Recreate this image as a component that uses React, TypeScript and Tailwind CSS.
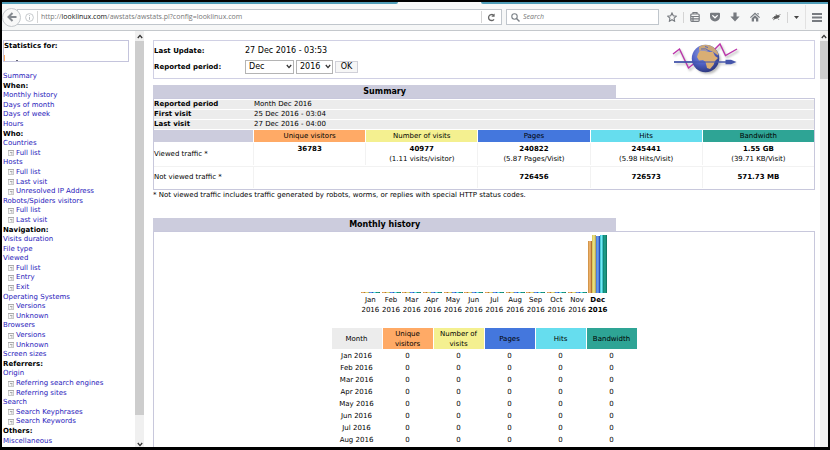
import React from 'react';

interface NavItem {
  label: string;
  kind: 'link' | 'head' | 'sub';
}

const nav: NavItem[] = [
  { label: 'Summary', kind: 'link' },
  { label: 'When:', kind: 'head' },
  { label: 'Monthly history', kind: 'link' },
  { label: 'Days of month', kind: 'link' },
  { label: 'Days of week', kind: 'link' },
  { label: 'Hours', kind: 'link' },
  { label: 'Who:', kind: 'head' },
  { label: 'Countries', kind: 'link' },
  { label: 'Full list', kind: 'sub' },
  { label: 'Hosts', kind: 'link' },
  { label: 'Full list', kind: 'sub' },
  { label: 'Last visit', kind: 'sub' },
  { label: 'Unresolved IP Address', kind: 'sub' },
  { label: 'Robots/Spiders visitors', kind: 'link' },
  { label: 'Full list', kind: 'sub' },
  { label: 'Last visit', kind: 'sub' },
  { label: 'Navigation:', kind: 'head' },
  { label: 'Visits duration', kind: 'link' },
  { label: 'File type', kind: 'link' },
  { label: 'Viewed', kind: 'link' },
  { label: 'Full list', kind: 'sub' },
  { label: 'Entry', kind: 'sub' },
  { label: 'Exit', kind: 'sub' },
  { label: 'Operating Systems', kind: 'link' },
  { label: 'Versions', kind: 'sub' },
  { label: 'Unknown', kind: 'sub' },
  { label: 'Browsers', kind: 'link' },
  { label: 'Versions', kind: 'sub' },
  { label: 'Unknown', kind: 'sub' },
  { label: 'Screen sizes', kind: 'link' },
  { label: 'Referrers:', kind: 'head' },
  { label: 'Origin', kind: 'link' },
  { label: 'Referring search engines', kind: 'sub' },
  { label: 'Referring sites', kind: 'sub' },
  { label: 'Search', kind: 'link' },
  { label: 'Search Keyphrases', kind: 'sub' },
  { label: 'Search Keywords', kind: 'sub' },
  { label: 'Others:', kind: 'head' },
  { label: 'Miscellaneous', kind: 'link' },
];

const months = ['Jan', 'Feb', 'Mar', 'Apr', 'May', 'Jun', 'Jul', 'Aug', 'Sep', 'Oct', 'Nov', 'Dec'];

const metrics = [
  { name: 'Unique visitors', bg: 'bg-[#ffaa66]', viewed: '36783', ratio: '', other: '' },
  { name: 'Number of visits', bg: 'bg-[#f4f090]', viewed: '40977', ratio: '(1.11 visits/visitor)', other: '' },
  { name: 'Pages', bg: 'bg-[#4477dd]', viewed: '240822', ratio: '(5.87 Pages/Visit)', other: '726456' },
  { name: 'Hits', bg: 'bg-[#66ddee]', viewed: '245441', ratio: '(5.98 Hits/Visit)', other: '726573' },
  { name: 'Bandwidth', bg: 'bg-[#2ea495]', viewed: '1.55 GB', ratio: '(39.71 KB/Visit)', other: '571.73 MB' },
];

const bars = [
  { color: 'w-1 bg-linear-to-r from-[#c98a3c] via-[#f5bb76] to-[#9c5a14]', height: 52 },
  { color: 'w-1 bg-linear-to-r from-[#d2c14e] via-[#f0e88e] to-[#a89a48]', height: 58 },
  { color: 'w-1 bg-linear-to-r from-[#3f6fd8] via-[#6fa2f8] to-[#16349a]', height: 57 },
  { color: 'w-[3px] bg-linear-to-r from-[#2fb8c8] via-[#70ecf4] to-[#22a8b4]', height: 58 },
  { color: 'w-1 bg-linear-to-r from-[#0f8070] via-[#1fa58e] to-[#0c6a58]', height: 58 },
];

function SubIcon() {
  return (
    <svg width="6" height="6" viewBox="0 0 6 6" className="shrink-0" aria-hidden="true">
      <rect x="0.5" y="0.5" width="5" height="5" fill="#f6f6f6" stroke="#c8c8c8" />
      <path d="M0 .5h6M2 2.500h2.500M3 4h1.500" stroke="#aaa" />
    </svg>
  );
}

function Chevron({ up = false }: { up?: boolean }) {
  return (
    <svg width="6" height="5" viewBox="0 0 6 5" fill="none" stroke="#333" strokeWidth="1.3" aria-hidden="true">
      <path d={up ? 'M.8 4 3 1.4 5.2 4' : 'M.8 1 3 3.6 5.2 1'} />
    </svg>
  );
}

function ScrollBar({ thumb, width, down = false }: { thumb: string; width: string; down?: boolean }) {
  return (
    <div className={`${width} flex shrink-0 flex-col items-center bg-[#f0f0f0]`}>
      <div className="flex h-[10px] shrink-0 items-center">
        <Chevron up />
      </div>
      <div className={`${thumb} w-full bg-[#cdcdcd]`} />
      {down && (
        <div className="mt-auto flex h-[6px] shrink-0 items-center">
          <Chevron />
        </div>
      )}
    </div>
  );
}

function GlobeLogo() {
  return (
    <svg width="68" height="35" viewBox="0 0 68 35" fill="none" aria-label="AWStats" role="img">
      <defs>
        <radialGradient id="sea" cx="0.4" cy="0.3" r="0.75">
          <stop offset="0" stopColor="#8f9ce0" />
          <stop offset="0.55" stopColor="#4f60c4" />
          <stop offset="1" stopColor="#2a3478" />
        </radialGradient>
        <filter id="soft" x="-20%" y="-20%" width="150%" height="150%">
          <feGaussianBlur stdDeviation="1" />
        </filter>
        <clipPath id="disc">
          <circle cx="33.500" cy="17.500" r="13.700" />
        </clipPath>
      </defs>
      <g filter="url(#soft)" opacity="0.4">
        <path d="M2.500 15 8.500 10 18 29l5-4M45 10l4.500-5L55 16.500 66.500 10" stroke="#555" strokeWidth="1.500" />
        <circle cx="35.500" cy="19.500" r="13.300" fill="#555" />
        <path d="M4 23h60" stroke="#666" strokeWidth="1.500" />
      </g>
      <path d="M1 13 7.500 8 16.500 27 22 22.500" stroke="#bb33aa" strokeWidth="1.400" />
      <path d="M2 21h20" stroke="#4455aa" strokeWidth="1.800" />
      <circle cx="33.500" cy="17.500" r="13.700" fill="url(#sea)" />
      <g clipPath="url(#disc)">
        <path d="M26 13l2-3.500 5 .5 4 1 4 0 2 4 3 2-3 3-1.500 4-3.500 4-3-1-1.500-6-2.500-2-4 .500-2-3.500z" fill="#d9ae74" />
        <path d="M27 6l4-2.500 6 0 6 3 3 5 0 3-4-3-4-2-4 0-5-.500-2 1z" fill="#c9a67a" />
        <path d="M29 8q5-1.500 9 2.500M33 5.500l3 1" stroke="#5a68b8" />
        <path d="M20 21h28" stroke="#4455aa" strokeWidth="1.300" opacity="0.700" />
      </g>
      <path d="M43 8 48 3 53.500 14.500 65 8" stroke="#bb33aa" strokeWidth="1.400" />
      <path d="M47 21h15" stroke="#4455aa" strokeWidth="1.500" />
      <path d="M53.500 18.800h5.500l5.500 2.200-5.500 2.200h-5.500z" fill="#4455aa" />
    </svg>
  );
}

function Toolbar() {
  return (
    <header className="shrink-0 border-b border-[#c4c8cc] bg-[#f6f7f7]">
      <div className="flex h-[2px]">
        <div className="w-[48%] rounded-br bg-[#4f9db8]" />
        <div className="w-[10%]" />
        <div className="flex-1 rounded-bl bg-[#4f9db8]" />
      </div>
      <div className="flex h-[26px] items-center font-['Open_Sans','Noto_Sans',sans-serif] text-[7px] leading-[10px] text-[#777]">
        <button type="button" aria-label="Back" className="z-10 -mr-1 flex size-[19px] shrink-0 items-center justify-center rounded-full border border-[#c4c8cc] bg-[#f8f8f8]">
          <svg width="10" height="10" viewBox="0 0 10 10" fill="none" stroke="#858a90" strokeWidth="2">
            <path d="M9.500 5H2M5.500 1 1.500 5l4 4" />
          </svg>
        </button>
        <div className="flex h-[16px] min-w-0 flex-1 items-center border border-[#c0c6cc] bg-white pl-[7px]">
          <svg width="9" height="9" viewBox="0 0 9 9" fill="none" stroke="#b8bcc0" className="shrink-0" aria-hidden="true">
            <circle cx="4.500" cy="4.500" r="3.900" strokeWidth="0.800" />
            <path d="M4.500 4v2.800M4.500 2.200v1" />
          </svg>
          <span className="mx-[3px] h-3 w-px shrink-0 bg-[#d4d4d4]" />
          <p className="flex-1 truncate">
            http://<span className="text-[#111]">looklinux.com</span>/awstats/awstats.pl?config=looklinux.com
          </p>
          <button type="button" aria-label="Reload" className="flex h-3 w-5 items-center justify-center border-l border-[#d4d4d4]">
            <svg width="9" height="9" viewBox="0 0 9 9" fill="none" stroke="#666" strokeWidth="1.300">
              <path d="M7 6.300A3 3 0 1 1 6.600 2.300" />
              <path d="M7.600 .4v3.400H4.300z" fill="#666" stroke="none" />
            </svg>
          </button>
        </div>
        <label className="ml-1 flex h-[16px] w-[153px] shrink-0 items-center gap-[3px] border border-[#c0c6cc] bg-white pl-1">
          <svg width="9" height="9" viewBox="0 0 9 9" fill="none" stroke="#7a8086" className="shrink-0" aria-hidden="true">
            <circle cx="3.500" cy="3.500" r="2.700" strokeWidth="1.100" />
            <path d="M5.500 5.500 8.500 8.500" strokeWidth="1.400" />
          </svg>
          <input type="text" aria-label="Search" placeholder="Search" className="w-full min-w-0 outline-none italic placeholder:text-[#777]" />
        </label>
        <div className="flex w-[169px] shrink-0 items-center justify-between pr-[6px] pl-2">
          <svg width="10" height="10" viewBox="0 0 10 10" fill="none" stroke="#777b80" strokeWidth="1.100">
            <path d="M5 .9 6.300 3.700l3 .4-2.200 2.100.5 3L5 7.700 2.400 9.200l.5-3L.7 4.100l3-.4z" />
          </svg>
          <span className="h-[11px] w-px bg-[#d4d4d4]" />
          <svg width="10" height="10" viewBox="0 0 10 10" fill="none" stroke="#777b80" strokeWidth="1.200">
            <rect x="0.800" y="2" width="8.400" height="7.300" rx="1" />
            <path d="M3 2V.7h4V2M1 4.500h8M1 6.800h8M3 4v5" />
          </svg>
          <svg width="10" height="10" viewBox="0 0 10 10" className="ml-1">
            <path d="M1 .8h8q1 0 1 1v2.700a5 5 0 0 1-10 0V1.800q0-1 1-1z" fill="#777b80" />
            <path d="M2.700 3.600 5 5.800l2.300-2.200" fill="none" stroke="#fff" strokeWidth="1.300" strokeLinecap="round" />
          </svg>
          <svg width="10" height="10" viewBox="0 0 10 10" fill="#777b80" className="mx-1">
            <path d="M3.400.5h3.200v4h3L5 9.500.4 4.500h3z" />
          </svg>
          <svg width="10" height="10" viewBox="0 0 10 10" fill="#777b80" className="mr-1">
            <path d="M5 .5 10 5.300l-.8.8L5 2.300.8 6.100 0 5.300zM7.300 1h1.300v2L7.300 1.800zM1.700 6.200 5 3.200l3.300 3V9.500H6V6.600H4v2.900H1.700z" />
          </svg>
          <svg width="10" height="8" viewBox="0 0 10 8" fill="none" stroke="#666" strokeWidth="0.700">
            <path d="M1 5.500 4 3.800M2 7l3-2M5 1l.8 2M7 5.500 8 7M7.500 3 9.500 1" />
            <ellipse cx="5.500" cy="4" rx="3" ry="1.300" fill="#555" transform="rotate(-20 5.500 4)" />
          </svg>
          <span className="h-[11px] w-px bg-[#d4d4d4]" />
          <svg width="5" height="3" viewBox="0 0 5 3">
            <path d="M0 0h5L2.500 3z" fill="#444" />
          </svg>
          <span className="h-[24px] w-px bg-[#e2e2e2]" />
          <svg width="10" height="9" viewBox="0 0 10 9" stroke="#777b80" strokeWidth="2">
            <path d="M0 1h10M0 4.500h10M0 8h10" />
          </svg>
        </div>
      </div>
    </header>
  );
}

function Sidebar() {
  return (
    <aside className="flex w-[133px] shrink-0 flex-col overflow-hidden pt-[9px] pb-px pl-px">
      <div className="mr-[6px] h-[22px] shrink-0 border border-[#c4c4dc] font-bold">
        <p>Statistics for:</p>
        <div className="flex h-[10px] items-end gap-[11px]">
          <span className="h-[6px] w-px bg-[#ffaa66]" />
          <span className="h-px w-[2px] bg-[#667]" />
        </div>
      </div>
      <nav className="mt-[10px] flex min-h-0 flex-1 flex-col justify-between leading-[9px]">
        {nav.map((item, i) => {
          if (item.kind === 'head') {
            return <p key={i} className="font-bold">{item.label}</p>;
          }
          if (item.kind === 'sub') {
            return (
              <a key={i} href="#" className="flex items-center gap-[2px] pl-[5px] text-[#2818bb]">
                <SubIcon />
                {item.label}
              </a>
            );
          }
          return <a key={i} href="#" className="text-[#2818bb]">{item.label}</a>;
        })}
      </nav>
    </aside>
  );
}

function PeriodSelect({ label, value, options, width }: { label: string; value: string; options: string[]; width: string }) {
  return (
    <span className={`relative ${width}`}>
      <select aria-label={label} defaultValue={value} className="h-[14px] w-full appearance-none border border-[#b4b4b4] bg-white pl-[3px] text-[8px] leading-[10px]">
        {options.map((o) => (
          <option key={o}>{o}</option>
        ))}
      </select>
      <span className="pointer-events-none absolute top-1 right-[2px]">
        <Chevron />
      </span>
    </span>
  );
}

function SectionTitle({ children }: { children: React.ReactNode }) {
  return <h2 className="flex h-[13px] w-[70%] items-center justify-center bg-[#ccccdd] text-[8px] font-bold">{children}</h2>;
}

function SummaryTable() {
  const info = [
    ['Reported period', 'Month Dec 2016'],
    ['First visit', '25 Dec 2016 - 03:04'],
    ['Last visit', '27 Dec 2016 - 04:00'],
  ];
  return (
    <table className="w-full table-fixed border-separate border-spacing-x-0 border-spacing-y-px border border-[#c8c8dc] text-center leading-[9px]">
      <colgroup>
        <col className="w-[15%]" />
        <col span={5} className="w-[17%]" />
      </colgroup>
      <tbody>
        {info.map(([name, value]) => (
          <tr key={name} className="h-[9px] bg-[#ececec] text-left">
            <th scope="row" className="p-0 font-bold">{name}</th>
            <td colSpan={5} className="p-0 pl-px">{value}</td>
          </tr>
        ))}
        <tr className="h-3">
          <td className="bg-[#ccccdd] p-0" />
          {metrics.map((m) => (
            <th key={m.name} scope="col" className={`${m.bg} border-l border-white p-0 font-normal`}>{m.name}</th>
          ))}
        </tr>
        <tr className="h-[22px] leading-[10px]">
          <th scope="row" className="p-0 text-left font-normal">Viewed traffic *</th>
          {metrics.map((m) => (
            <td key={m.name} className="border-l border-[#f2f2f2] p-0">
              <b>{m.viewed}</b>
              <br />
              {m.ratio || '\u00a0'}
            </td>
          ))}
        </tr>
        <tr className="h-[22px]">
          <th scope="row" className="border-t border-[#f2f2f2] p-0 text-left font-normal">Not viewed traffic *</th>
          <td colSpan={2} className="border-t border-l border-[#f2f2f2] p-0" />
          {metrics.slice(2).map((m) => (
            <td key={m.name} className="border-t border-l border-[#f2f2f2] p-0 font-bold">{m.other}</td>
          ))}
        </tr>
      </tbody>
    </table>
  );
}

function MonthlyChart() {
  return (
    <div className="flex w-[248px] text-center leading-[10px]">
      {months.map((m) => (
        <div key={m} className={m === 'Dec' ? 'min-w-0 flex-1 font-bold' : 'min-w-0 flex-1'}>
          <div className="flex h-[58px] items-end justify-center">
            {bars.map((b, i) => (
              <span key={i} className={b.color} style={{ height: m === 'Dec' ? b.height : 1 }} />
            ))}
          </div>
          <p className="mt-[2px]">
            {m}
            <br />
            2016
          </p>
        </div>
      ))}
    </div>
  );
}

function MonthlyTable() {
  return (
    <table className="mt-3 w-[307px] table-fixed border-separate border-spacing-px text-center leading-[10px]">
      <thead>
        <tr className="h-[21px]">
          <th scope="col" className="bg-[#ececec] p-0 font-normal">Month</th>
          {metrics.map((m) => (
            <th key={m.name} scope="col" className={`${m.bg} px-1 py-0 font-normal`}>{m.name}</th>
          ))}
        </tr>
      </thead>
      <tbody>
        {months.slice(0, 8).map((m) => (
          <tr key={m} className="h-[11px]">
            <td className="p-0">{m} 2016</td>
            {metrics.map((x) => (
              <td key={x.name} className="p-0">0</td>
            ))}
          </tr>
        ))}
      </tbody>
    </table>
  );
}

export default function App() {
  return (
    <div className="h-screen bg-black px-[2px] pt-[2px] pb-[3px]">
      <div className="flex h-full flex-col overflow-hidden bg-white font-['DejaVu_Sans',sans-serif] text-[7px] leading-[10px] text-black">
        <Toolbar />
        <div className="flex min-h-0 flex-1">
          <Sidebar />
          <ScrollBar thumb="h-[90%]" width="w-[9px]" down />
          <main className="min-w-0 flex-1 overflow-hidden pt-[9px] pr-[5px] pl-[9px]">
            <form className="flex h-[39px] justify-between border border-[#d0d0e4]" onSubmit={(e) => e.preventDefault()}>
              <div className="grid grid-cols-[91px_auto] content-center items-center gap-y-1">
                <b>Last Update:</b>
                <span className="text-[8px]">27 Dec 2016 - 03:53</span>
                <b>Reported period:</b>
                <div className="flex items-center gap-[2px]">
                  <PeriodSelect label="Month" value="Dec" options={months} width="w-[49px]" />
                  <PeriodSelect label="Year" value="2016" options={['2015', '2016']} width="w-[37px]" />
                  <button type="submit" className="h-3 w-[23px] border border-[#d0d0d8] bg-[#f6f6f6] text-[8px] leading-[10px]">OK</button>
                </div>
              </div>
              <div className="mr-[74px]">
                <GlobeLogo />
              </div>
            </form>

            <section className="mt-[6px]">
              <SectionTitle>Summary</SectionTitle>
              <SummaryTable />
              <p>* Not viewed traffic includes traffic generated by robots, worms, or replies with special HTTP status codes.</p>
            </section>

            <section className="mt-[18px]">
              <SectionTitle>Monthly history</SectionTitle>
              <div className="flex flex-col items-center border border-[#c8c8dc] pt-[3px] pb-3">
                <MonthlyChart />
                <MonthlyTable />
              </div>
            </section>
          </main>
          <ScrollBar thumb="h-[38px]" width="w-2" />
        </div>
      </div>
    </div>
  );
}
